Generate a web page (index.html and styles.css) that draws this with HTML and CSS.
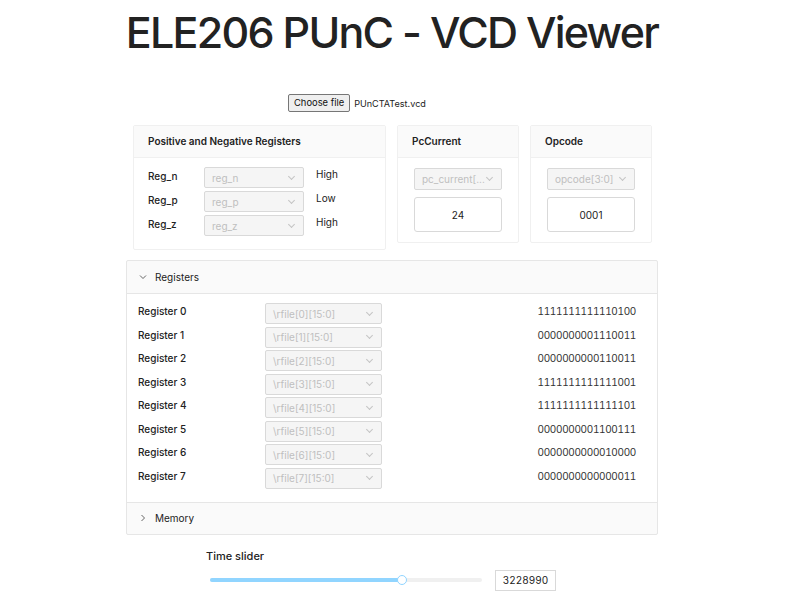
FILE: index.html
```html
<!DOCTYPE html>
<html>
<head>
<meta charset="utf-8">
<link rel="stylesheet" href="styles.css">
</head>
<body>
<div class="page">
  <h1 class="title">ELE206 PUnC - VCD Viewer</h1>
  <div class="file-row">
    <span class="file-btn">Choose file</span>
    <span class="file-name">PUnCTATest.vcd</span>
  </div>
  <div class="main">
    <div class="cards">
      <div class="card card-regs">
        <div class="card-head">Positive and Negative Registers</div>
        <div class="card-body regs-body">
          <div class="reg-row"><span class="reg-label">Reg_n</span><span class="select sel-small"><span>reg_n</span><i class="chev"></i></span><span class="reg-val">High</span></div>
          <div class="reg-row"><span class="reg-label">Reg_p</span><span class="select sel-small"><span>reg_p</span><i class="chev"></i></span><span class="reg-val">Low</span></div>
          <div class="reg-row"><span class="reg-label">Reg_z</span><span class="select sel-small"><span>reg_z</span><i class="chev"></i></span><span class="reg-val">High</span></div>
        </div>
      </div>
      <div class="card card-small">
        <div class="card-head">PcCurrent</div>
        <div class="card-body small-body">
          <span class="select sel-block"><span>pc_current[...</span><i class="chev"></i></span>
          <div class="value-box">24</div>
        </div>
      </div>
      <div class="card card-small">
        <div class="card-head">Opcode</div>
        <div class="card-body small-body">
          <span class="select sel-block"><span>opcode[3:0]</span><i class="chev"></i></span>
          <div class="value-box">0001</div>
        </div>
      </div>
    </div>

    <div class="collapse">
      <div class="col-head"><svg class="arrow" width="8" height="8" viewBox="0 0 8 8"><path d="M1 2.5 L4 5.5 L7 2.5" fill="none" stroke="#555" stroke-width="0.9"/></svg>Registers</div>
      <div class="col-body">
        <div class="r-row"><span class="r-label">Register 0</span><span class="select sel-r"><span>\rfile[0][15:0]</span><i class="chev"></i></span><span class="r-val">1111111111110100</span></div>
        <div class="r-row"><span class="r-label">Register 1</span><span class="select sel-r"><span>\rfile[1][15:0]</span><i class="chev"></i></span><span class="r-val">0000000001110011</span></div>
        <div class="r-row"><span class="r-label">Register 2</span><span class="select sel-r"><span>\rfile[2][15:0]</span><i class="chev"></i></span><span class="r-val">0000000000110011</span></div>
        <div class="r-row"><span class="r-label">Register 3</span><span class="select sel-r"><span>\rfile[3][15:0]</span><i class="chev"></i></span><span class="r-val">1111111111111001</span></div>
        <div class="r-row"><span class="r-label">Register 4</span><span class="select sel-r"><span>\rfile[4][15:0]</span><i class="chev"></i></span><span class="r-val">1111111111111101</span></div>
        <div class="r-row"><span class="r-label">Register 5</span><span class="select sel-r"><span>\rfile[5][15:0]</span><i class="chev"></i></span><span class="r-val">0000000001100111</span></div>
        <div class="r-row"><span class="r-label">Register 6</span><span class="select sel-r"><span>\rfile[6][15:0]</span><i class="chev"></i></span><span class="r-val">0000000000010000</span></div>
        <div class="r-row"><span class="r-label">Register 7</span><span class="select sel-r"><span>\rfile[7][15:0]</span><i class="chev"></i></span><span class="r-val">0000000000000011</span></div>
      </div>
      <div class="col-head col-last"><svg class="arrow" width="8" height="8" viewBox="0 0 8 8"><path d="M2.5 1 L5.5 4 L2.5 7" fill="none" stroke="#555" stroke-width="0.9"/></svg>Memory</div>
    </div>

    <div class="slider-sec">
      <div class="slider-label">Time slider</div>
      <div class="slider-row">
        <div class="rail"><div class="track" style="width:70.6%"></div><div class="handle" style="left:70.6%"></div></div>
        <div class="num-box">3228990</div>
      </div>
    </div>
  </div>
</div>
</body>
</html>
```

FILE: styles.css
```css
* { box-sizing: border-box; }
html, body { margin: 0; padding: 0; background: #fff; }
body {
  font-family: Inter, "Noto Sans", "Liberation Sans", sans-serif;
  color: #222;
  overflow: hidden;
}
.page {
  width: 784px;
  display: flex;
  flex-direction: column;
  align-items: center;
}
.title {
  margin: 8px 0 0 0;
  font-size: 43px;
  font-weight: 500;
  line-height: 48px;
  color: #222;
  letter-spacing: -1.75px;
}
.file-row {
  margin-top: 38px;
  width: 208px;
  display: flex;
  align-items: center;
  gap: 4px;
  font-size: 9.1px;
}
.file-btn {
  display: inline-block;
  height: 18px;
  line-height: 16px;
  padding: 0 5px;
  border: 1px solid #767676;
  border-radius: 2px;
  background: #efefef;
  color: #111;
  font-size: 9.4px;
}
.file-name { color: #222; }
.main {
  width: 532px;
  margin-top: 13px;
}
.cards {
  display: flex;
  padding: 0 6px 0 7px;
  gap: 11px;
  align-items: flex-start;
}
.card {
  border: 1px solid #f0f0f0;
  background: #fff;
  border-radius: 2px;
}
.card-regs { width: 253px; height: 125px; }
.card-small { width: 122px; height: 118px; }
.card-head {
  height: 32px;
  line-height: 31px;
  padding-left: 14px;
  font-size: 10px;
  font-weight: 600;
  background: #fafafa;
  border-bottom: 1px solid #f0f0f0;
  color: #222;
}
.regs-body { padding: 9px 14px 0 14px; display: flex; flex-direction: column; gap: 3px; }
.reg-row { display: flex; align-items: flex-start; height: 21px; }
.reg-label { width: 56px; font-size: 10px; font-weight: 500; line-height: 14px; padding-top: 2px; }
.reg-val { margin-left: 12px; font-size: 10px; line-height: 14px; padding-top: 0; }
.select {
  display: flex;
  align-items: center;
  justify-content: space-between;
  border: 1px solid #d9d9d9;
  background: #f5f5f5;
  border-radius: 2px;
  color: #bfbfbf;
  font-size: 10px;
  padding: 0 7px 0 7px;
}
.sel-small { width: 100px; height: 21px; }
.chev {
  width: 5px; height: 5px;
  border-right: 1px solid #c4c4c4;
  border-bottom: 1px solid #c4c4c4;
  transform: rotate(45deg);
  margin-top: -3px;
  margin-right: 2px;
}
.small-body { padding: 10px 15px 0 16px; display: flex; flex-direction: column; gap: 7px; }
.sel-block { width: 88px; height: 22px; }
.value-box {
  width: 88px; height: 35px;
  border: 1px solid #d9d9d9;
  border-radius: 3px;
  display: flex; align-items: center; justify-content: center;
  font-size: 10px;
  color: #222;
}
.collapse {
  margin-top: 10px;
  border: 1px solid #e6e6e6;
  border-radius: 2px;
  background: #fafafa;
}
.col-head {
  height: 32px;
  display: flex;
  align-items: center;
  padding-left: 12px;
  font-size: 10px;
  color: #222;
}
.arrow { margin-right: 8px; }
.col-body {
  background: #fff;
  border-top: 1px solid #e6e6e6;
  border-bottom: 1px solid #e6e6e6;
  padding: 9px 21px 13px 11px;
  display: flex; flex-direction: column; gap: 2.5px;
}
.r-row { display: flex; align-items: flex-start; height: 21px; }
.r-label { width: 127px; font-size: 10px; font-weight: 500; line-height: 14px; padding-top: 1px; }
.sel-r { width: 117px; height: 21px; }
.r-val { margin-left: auto; font-size: 10px; line-height: 14px; padding-top: 1px; color: #333; font-variant-numeric: tabular-nums; letter-spacing: -0.33px; }
.col-last { height: 31px; }
.slider-sec { padding-left: 80px; margin-top: 14px; }
.slider-label { font-size: 11px; font-weight: 500; color: #222; }
.slider-row { display: flex; align-items: center; margin-top: 7px; }
.rail {
  position: relative;
  width: 272px;
  height: 4px;
  margin-left: 4px;
  background: #f0f0f0;
  border-radius: 2px;
}
.track { height: 4px; background: #91d5ff; border-radius: 2px; }
.handle {
  position: absolute;
  top: -3px;
  width: 10px; height: 10px;
  margin-left: -5px;
  border-radius: 50%;
  background: #fff;
  border: 1.5px solid #91d5ff;
}
.num-box {
  margin-left: 13px;
  width: 61px; height: 21px;
  border: 1px solid #d9d9d9;
  display: flex; align-items: center; justify-content: center;
  font-size: 10px;
  color: #222;
  font-variant-numeric: tabular-nums;
}
```
